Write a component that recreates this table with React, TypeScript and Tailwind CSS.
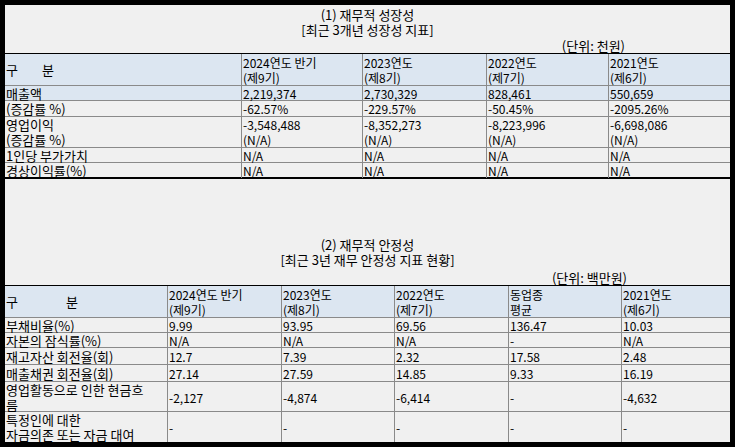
const font = "font-['Noto_Sans_CJK_KR','Noto_Sans',sans-serif]";

type Row = { h: string; blue?: boolean; cells: React.ReactNode[] };

const growth: Row[] = [
  {
    h: "h-[32px]",
    blue: true,
    cells: [
      <span>
        구<span className="ml-[24px]">분</span>
      </span>,
      <>2024연도 반기<br />(제9기)</>,
      <>2023연도<br />(제8기)</>,
      <>2022연도<br />(제7기)</>,
      <>2021연도<br />(제6기)</>,
    ],
  },
  { h: "h-[15px]", blue: true, cells: ["매출액", "2,219,374", "2,730,329", "828,461", "550,659"] },
  { h: "h-[16px]", cells: ["(증감률 %)", "-62.57%", "-229.57%", "-50.45%", "-2095.26%"] },
  {
    h: "h-[31px]",
    cells: [
      <>영업이익<br />(증감률 %)</>,
      <>-3,548,488<br />(N/A)</>,
      <>-8,352,273<br />(N/A)</>,
      <>-8,223,996<br />(N/A)</>,
      <>-6,698,086<br />(N/A)</>,
    ],
  },
  { h: "h-[15px]", cells: ["1인당 부가가치", "N/A", "N/A", "N/A", "N/A"] },
  { h: "h-[17px]", cells: ["경상이익률(%)", "N/A", "N/A", "N/A", "N/A"] },
];

const stability: Row[] = [
  {
    h: "h-[32px]",
    blue: true,
    cells: [
      <span>
        구<span className="ml-[48px]">분</span>
      </span>,
      <>2024연도 반기<br />(제9기)</>,
      <>2023연도<br />(제8기)</>,
      <>2022연도<br />(제7기)</>,
      <>동업종<br />평균</>,
      <>2021연도<br />(제6기)</>,
    ],
  },
  { h: "h-[15px]", cells: ["부채비율(%)", "9.99", "93.95", "69.56", "136.47", "10.03"] },
  { h: "h-[15px]", cells: ["자본의 잠식률(%)", "N/A", "N/A", "N/A", "-", "N/A"] },
  { h: "h-[17px]", cells: ["재고자산 회전율(회)", "12.7", "7.39", "2.32", "17.58", "2.48"] },
  { h: "h-[17px]", cells: ["매출채권 회전율(회)", "27.14", "27.59", "14.85", "9.33", "16.19"] },
  {
    h: "h-[30px]",
    cells: [<>영업활동으로 인한 현금흐<br />름</>, "-2,127", "-4,874", "-6,414", "-", "-4,632"],
  },
  {
    h: "h-[30px]",
    cells: [<>특정인에 대한<br />자금의존 또는 자금 대여</>, "-", "-", "-", "-", "-"],
  },
];

function DataTable({ rows, cols, bottom }: { rows: Row[]; cols: string; bottom?: boolean }) {
  return (
    <div className="w-[725px] shrink-0">
      {rows.map((r, i) => (
        <div
          key={i}
          className={`grid ${cols} ${r.h} ${r.blue ? "bg-[#dce6f1]" : ""} ${
            i === 0 ? "border-t border-black" : "border-t border-[#8a8a8a]"
          } ${bottom && i === rows.length - 1 ? "border-b-2 border-b-black" : ""}`}
        >
          {r.cells.map((c, j) => (
            <div
              key={j}
              className={`flex items-center pl-px whitespace-nowrap leading-[15px] ${
                j === 0 ? "text-[13px]" : "border-l border-[#8a8a8a]"
              }`}
            >
              <div>{c}</div>
            </div>
          ))}
        </div>
      ))}
    </div>
  );
}

export default function App() {
  return (
    <div className="w-[735px] h-[447px] bg-black p-[5px] overflow-hidden">
      <div className={`h-[437px] flex flex-col bg-[#f0f0f0] text-black text-[12px] leading-[15px] ${font} overflow-hidden`}>
        {/* (1) 성장성 */}
        <div className="h-[33px] shrink-0 pt-[2px] text-center text-[13px]">
          <p>(1) 재무적 성장성</p>
          <p>[최근 3개년 성장성 지표]</p>
        </div>
        <p className="h-[15px] shrink-0 text-right pr-[105px] text-[13px]">(단위: 천원)</p>
        <DataTable rows={growth} cols="grid-cols-[236px_121px_124px_122px_122px]" bottom />

        {/* (2) 안정성 */}
        <div className="mt-[58px] h-[31px] shrink-0 text-center text-[13px]">
          <p>(2) 재무적 안정성</p>
          <p>[최근 3년 재무 안정성 지표 현황]</p>
        </div>
        <p className="mt-[2px] h-[15px] shrink-0 text-right pr-[103px] text-[13px]">(단위: 백만원)</p>
        <DataTable rows={stability} cols="grid-cols-[162px_114px_113px_114px_113px_109px]" />
      </div>
    </div>
  );
}
